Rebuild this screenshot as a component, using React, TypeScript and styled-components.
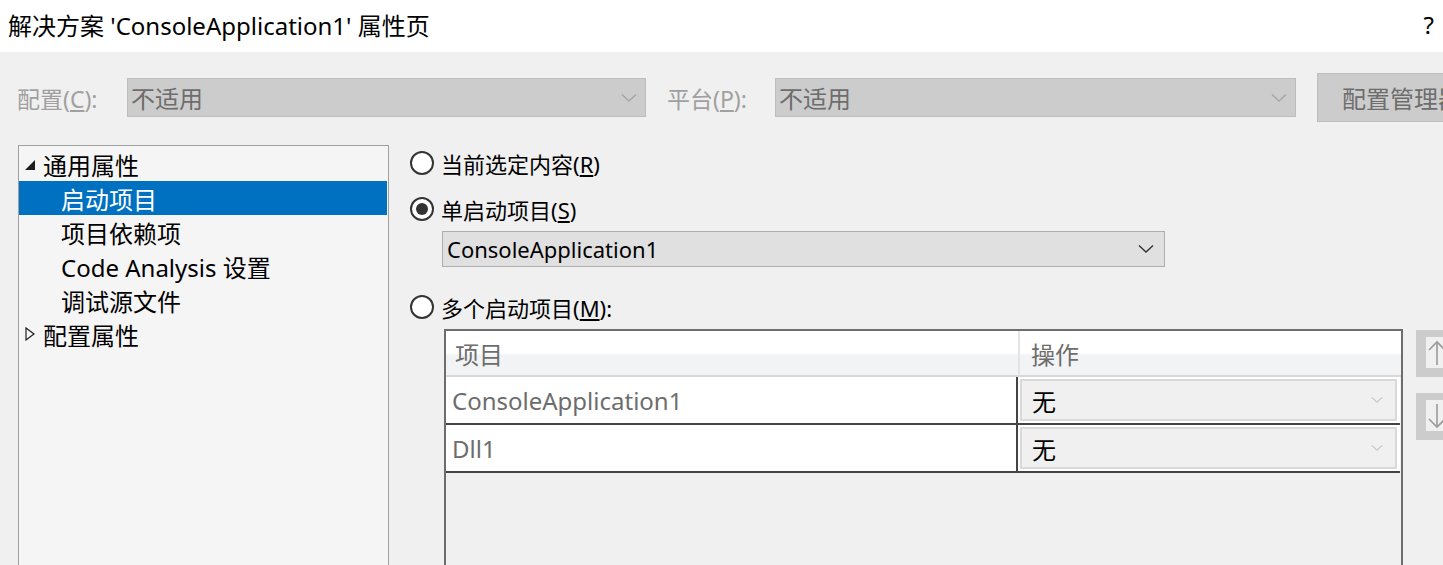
import styled, { createGlobalStyle } from "styled-components";

const GlobalStyle = createGlobalStyle`
  html, body {
    margin: 0;
    padding: 0;
    background: #f0f0f0;
    overflow: hidden;
  }
  body {
    font-family: "Noto Sans", "Noto Sans CJK SC", sans-serif;
    color: #000;
  }
`;

const Window = styled.div`
  width: 1443px;
  height: 565px;
  display: flex;
  flex-direction: column;
  overflow: hidden;
  background: #f0f0f0;
`;

const TitleBar = styled.div`
  height: 52px;
  flex-shrink: 0;
  background: #fff;
  display: flex;
  align-items: center;
  justify-content: space-between;
  padding: 0 9px 4px 8px;
  font-size: 24px;
  box-sizing: border-box;
`;

// mnemonic "(X)" kept in its own box so the parens shape as latin
const Key = styled.span`
  display: inline-block;
  font-family: "Noto Sans", sans-serif;
`;

const ConfigRow = styled.div`
  display: flex;
  align-items: center;
  height: 49px;
  margin-top: 21px;
  padding-left: 17px;
  flex-shrink: 0;
`;

const DimLabel = styled.span<{ $w: number; $ml?: number }>`
  width: ${(p) => p.$w}px;
  margin-left: ${(p) => p.$ml ?? 0}px;
  flex-shrink: 0;
  font-size: 23px;
  color: #a0a0a0;
  white-space: nowrap;
`;

const DisabledCombo = styled.div<{ $w: number }>`
  width: ${(p) => p.$w}px;
  height: 39px;
  flex-shrink: 0;
  box-sizing: border-box;
  background: #cccccc;
  border: 1px solid #bdbdbd;
  display: flex;
  align-items: center;
  justify-content: space-between;
  padding: 0 8px 0 3px;
  font-size: 24px;
  color: #6d6d6d;
`;

const DisabledButton = styled.div`
  width: 150px;
  height: 49px;
  margin-left: 21px;
  flex-shrink: 0;
  box-sizing: border-box;
  background: #cccccc;
  border: 1px solid #bdbdbd;
  display: flex;
  align-items: center;
  padding-left: 24px;
  font-size: 24px;
  color: #6d6d6d;
  white-space: nowrap;
  overflow: hidden;
`;

const Body = styled.div`
  display: flex;
  margin-top: 23px;
  padding-left: 18px;
  flex-shrink: 0;
`;

const Tree = styled.div`
  width: 371px;
  height: 440px;
  box-sizing: border-box;
  border: 1px solid #a0a0a0;
  background: #f5f5f5;
  padding: 1px 1px 0 0;
  flex-shrink: 0;
`;

const TreeRow = styled.div<{ $level: number; $selected?: boolean }>`
  height: 34px;
  display: flex;
  align-items: center;
  padding-left: ${(p) => (p.$level === 0 ? 5 : 42)}px;
  font-size: 24px;
  background: ${(p) => (p.$selected ? "#0070c0" : "transparent")};
  color: ${(p) => (p.$selected ? "#fff" : "#000")};
  white-space: nowrap;
`;

const Expander = styled.svg`
  width: 12px;
  height: 14px;
  margin-right: 7px;
  flex-shrink: 0;
`;

const RightPane = styled.div`
  margin-left: 21px;
  display: flex;
  flex-direction: column;
  flex: 1;
  & > * {
    flex-shrink: 0;
  }
`;

const RadioRow = styled.label<{ $top: number }>`
  display: flex;
  align-items: center;
  gap: 7px;
  margin-top: ${(p) => p.$top}px;
  height: 26px;
  font-size: 22px;
  white-space: nowrap;
`;

const RadioCircle = styled.span<{ $checked?: boolean }>`
  width: 24px;
  height: 24px;
  box-sizing: border-box;
  border-radius: 50%;
  border: 2px solid #333;
  background: #fff;
  display: flex;
  align-items: center;
  justify-content: center;
  flex-shrink: 0;
  &::after {
    content: "";
    width: 12px;
    height: 12px;
    border-radius: 50%;
    background: ${(p) => (p.$checked ? "#333" : "transparent")};
  }
`;

const ProjectCombo = styled.div`
  width: 723px;
  height: 36px;
  box-sizing: border-box;
  margin: 9px 0 0 32px;
  background: #e0e0e0;
  border: 1px solid #adadad;
  display: flex;
  align-items: center;
  justify-content: space-between;
  padding: 0 10px 0 4px;
  font-size: 22px;
`;

const TableArea = styled.div`
  display: flex;
  align-items: flex-start;
  gap: 13px;
  margin: 9px 0 0 34px;
`;

const Grid = styled.div`
  width: 959px;
  height: 260px;
  flex-shrink: 0;
  box-sizing: border-box;
  border: 2px solid #6d6d6d;
  border-bottom: none;
  background: #f0f0f0;
  display: flex;
  flex-direction: column;
`;

const HeaderRow = styled.div`
  display: grid;
  grid-template-columns: 572px 1fr;
  height: 46px;
  flex-shrink: 0;
  background: linear-gradient(#ffffff 0%, #ffffff 50%, #f2f3f5 55%, #f2f3f5 100%);
  border-bottom: 2px solid #d8d8d8;
  box-sizing: border-box;
`;

const HeaderCell = styled.div<{ $first?: boolean }>`
  display: flex;
  align-items: center;
  padding-left: ${(p) => (p.$first ? 9 : 11)}px;
  font-size: 24px;
  color: #6d6d6d;
  border-left: ${(p) => (p.$first ? "none" : "2px solid #e4e4e4")};
`;

const DataRow = styled.div`
  display: grid;
  grid-template-columns: 572px 1fr;
  height: 48px;
  flex-shrink: 0;
  box-sizing: border-box;
  border-bottom: 2px solid #444;
  margin-right: 1px;
`;

const NameCell = styled.div`
  background: #fff;
  display: flex;
  align-items: center;
  padding-left: 6px;
  font-size: 24px;
  color: #6d6d6d;
  border-right: 2px solid #444;
`;

const ActionCell = styled.div`
  background: #fff;
  padding: 2px 3px 2px 2px;
  display: flex;
`;

const ActionCombo = styled.div`
  flex: 1;
  box-sizing: border-box;
  border: 2px solid #d9d9d9;
  background: #f0f0f0;
  display: flex;
  align-items: center;
  justify-content: space-between;
  padding: 0 12px 0 10px;
  font-size: 24px;
`;

const SideButtons = styled.div`
  display: flex;
  flex-direction: column;
  gap: 16px;
  margin-top: 1px;
  flex-shrink: 0;
`;

const MoveButton = styled.div`
  width: 40px;
  height: 47px;
  box-sizing: border-box;
  background: #cccccc;
  padding: 7px 0 9px 10px;
  display: flex;
`;

const MoveFace = styled.div`
  flex: 1;
  background: #f0f0f0;
  display: flex;
  align-items: center;
  padding-left: 2px;
`;

const Chevron = ({ color, size = 16 }: { color: string; size?: number }) => (
  <svg width={size} height={size / 2 + 2} viewBox="0 0 16 10">
    <polyline points="1,1.5 8,8 15,1.5" fill="none" stroke={color} strokeWidth="1.4" />
  </svg>
);

const Arrow = ({ down }: { down?: boolean }) => (
  <svg width="18" height="28" viewBox="0 0 18 28">
    <g
      fill="none"
      stroke="#9a9a9a"
      strokeWidth="1.6"
      transform={down ? "rotate(180 9 14)" : undefined}
    >
      <line x1="9" y1="3" x2="9" y2="26" />
      <polyline points="1,11 9,3 17,11" />
    </g>
  </svg>
);

function App() {
  return (
    <Window>
      <GlobalStyle />
      <TitleBar>
        <span>解决方案 'ConsoleApplication1' 属性页</span>
        <span>?</span>
      </TitleBar>

      <ConfigRow>
        <DimLabel $w={110}>
          配置<Key>(<u>C</u>):</Key>
        </DimLabel>
        <DisabledCombo $w={519}>
          <span>不适用</span>
          <Chevron color="#a6a6a6" />
        </DisabledCombo>
        <DimLabel $w={108} $ml={21}>
          平台<Key>(<u>P</u>):</Key>
        </DimLabel>
        <DisabledCombo $w={521}>
          <span>不适用</span>
          <Chevron color="#a6a6a6" />
        </DisabledCombo>
        <DisabledButton>配置管理器(O)...</DisabledButton>
      </ConfigRow>

      <Body>
        <Tree>
          <TreeRow $level={0}>
            <Expander viewBox="0 0 12 14">
              <polygon points="11,3 11,13 1,13" fill="#1e1e1e" />
            </Expander>
            通用属性
          </TreeRow>
          <TreeRow $level={1} $selected>
            启动项目
          </TreeRow>
          <TreeRow $level={1}>项目依赖项</TreeRow>
          <TreeRow $level={1}>Code Analysis 设置</TreeRow>
          <TreeRow $level={1}>调试源文件</TreeRow>
          <TreeRow $level={0}>
            <Expander viewBox="0 0 12 14">
              <polygon points="2,1 10,7 2,13" fill="none" stroke="#1e1e1e" strokeWidth="1.2" />
            </Expander>
            配置属性
          </TreeRow>
        </Tree>

        <RightPane>
          <RadioRow $top={5}>
            <RadioCircle />
            <span>
              当前选定内容<Key>(<u>R</u>)</Key>
            </span>
          </RadioRow>
          <RadioRow $top={20}>
            <RadioCircle $checked />
            <span>
              单启动项目<Key>(<u>S</u>)</Key>
            </span>
          </RadioRow>
          <ProjectCombo>
            <span>ConsoleApplication1</span>
            <Chevron color="#333" />
          </ProjectCombo>
          <RadioRow $top={27}>
            <RadioCircle />
            <span>
              多个启动项目<Key>(<u>M</u>):</Key>
            </span>
          </RadioRow>
          <TableArea>
            <Grid>
              <HeaderRow>
                <HeaderCell $first>项目</HeaderCell>
                <HeaderCell>操作</HeaderCell>
              </HeaderRow>
              {["ConsoleApplication1", "Dll1"].map((name) => (
                <DataRow key={name}>
                  <NameCell>{name}</NameCell>
                  <ActionCell>
                    <ActionCombo>
                      <span>无</span>
                      <Chevron color="#c4c4c4" size={12} />
                    </ActionCombo>
                  </ActionCell>
                </DataRow>
              ))}
            </Grid>
            <SideButtons>
              <MoveButton>
                <MoveFace>
                  <Arrow />
                </MoveFace>
              </MoveButton>
              <MoveButton>
                <MoveFace>
                  <Arrow down />
                </MoveFace>
              </MoveButton>
            </SideButtons>
          </TableArea>
        </RightPane>
      </Body>
    </Window>
  );
}

export default App;
